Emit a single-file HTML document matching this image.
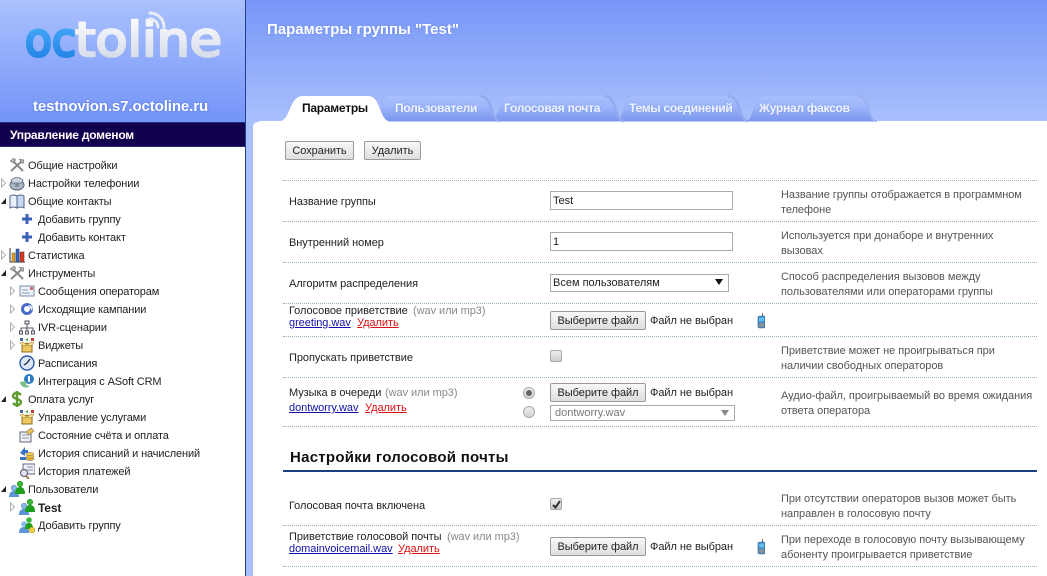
<!DOCTYPE html>
<html lang="ru"><head><meta charset="utf-8"><title>Параметры группы</title>
<style>
html,body{margin:0;padding:0;width:1047px;height:576px;overflow:hidden;background:#fff}
body{position:relative;font:11px/14px "Liberation Sans","DejaVu Sans",sans-serif;color:#222}
.t,.a{position:absolute;white-space:nowrap}
.t{line-height:14px;letter-spacing:-.05px;margin-top:1px}
.n{letter-spacing:-.13px}
.a{box-sizing:border-box}
.h{color:#555}.g{color:#888}
a{text-decoration:underline}.l{color:#11a}.r{color:#d11}
.b{position:absolute;box-sizing:border-box;border:1px solid #9a9a9a;border-radius:2px;background:linear-gradient(#f8f8f8,#dedede);text-align:center;line-height:19px;color:#222;letter-spacing:-.05px}
.i{position:absolute;box-sizing:border-box;border:1px solid #aaa;background:#fff;padding-left:2px;line-height:18px;color:#222}
.d{position:absolute;left:283px;width:754px;height:0;border-top:1px dotted #8fb0b8}
.c{position:absolute;left:550px;width:12px;height:12px;box-sizing:border-box;border:1px solid #aaa;border-radius:2px;background:linear-gradient(#eee,#ccc)}
.o{position:absolute;left:523px;width:12px;height:12px;box-sizing:border-box;border:1px solid #aaa;border-radius:50%;background:linear-gradient(#eee,#d4d4d4)}
.m{font-size:12px;font-weight:bold;letter-spacing:-.25px;color:#f0f4ff;margin-top:0;text-shadow:0 0 2px #7f9af0}
svg.s{position:absolute;width:16px;height:16px}
</style></head><body>

<div class="a" style="left:0;top:0;width:245px;height:122px;background:linear-gradient(#aac1fd,#7494f8)"></div>
<div class="a" style="left:245px;top:0;width:1px;height:576px;background:#23408c"></div>
<div class="a" style="left:246px;top:0;width:801px;height:122px;background:linear-gradient(#7796f8,#a9c0fc)"></div>
<div class="a" style="left:246px;top:122px;width:7px;height:454px;background:#a9c0fc"></div>
<div class="a" style="left:253px;top:121px;width:794px;height:455px;background:#fff;border-top-left-radius:9px"></div>
<svg class="a" style="left:246px;top:110px;width:12px;height:24px" viewBox="0 0 12 24"><path d="M7 11h5v1c-3 0-5 2-5 5z" fill="#a9c0fc"/></svg>

<svg class="a" style="left:15px;top:5px;width:215px;height:70px" viewBox="0 0 215 70">
<defs><linearGradient id="lg1" x1="0" y1="0" x2="0" y2="1"><stop offset="0" stop-color="#52b4ff"/><stop offset="1" stop-color="#1c7ce0"/></linearGradient>
<linearGradient id="lg2" x1="0" y1="0" x2="0" y2="1"><stop offset="0" stop-color="#ffffff"/><stop offset="1" stop-color="#cdd5e4"/></linearGradient></defs>
<text x="10" y="51" font-family="'DejaVu Sans',sans-serif" font-size="46" fill="url(#lg1)" stroke="url(#lg1)" stroke-width="3" stroke-linejoin="round" textLength="51" lengthAdjust="spacingAndGlyphs">oc</text>
<text x="60" y="51" font-family="'DejaVu Sans',sans-serif" font-size="47" fill="url(#lg2)" stroke="url(#lg2)" stroke-width="2.500" stroke-linejoin="round" textLength="147" lengthAdjust="spacingAndGlyphs">toline</text>
<path d="M135 8a14 14 0 0 1 14 14M135 14a8 8 0 0 1 8 8" fill="none" stroke="#e9edf5" stroke-width="3" stroke-linecap="round"/>
</svg>
<span class="t" style="left:33px;top:99px;margin-top:0;font-size:15px;line-height:16px;font-weight:bold;color:#fff;letter-spacing:-.1px;text-shadow:0 0 2px #4d6fd8">testnovion.s7.octoline.ru</span>
<div class="a" style="left:0;top:122px;width:245px;height:25px;background:#12004f;border-top:1px solid #23307c;border-bottom:1px solid #23307c"></div>
<span class="t" style="left:10px;top:127px;font-size:12px;font-weight:bold;color:#fff;letter-spacing:-.22px">Управление доменом</span>

<svg width="0" height="0" style="position:absolute"><defs>
<symbol id="tools" viewBox="0 0 16 16"><path d="M2 14 13 4M14 14 4 4" stroke="#888" stroke-width="2" fill="none"/><path d="M1 4l4-3 2 2-3 3zM10 2l5 1-1 4z" fill="#aab0b8" stroke="#666" stroke-width=".5"/></symbol>
<symbol id="phone" viewBox="0 0 16 16"><ellipse cx="8" cy="10" rx="7" ry="5" fill="#aeb8c6" stroke="#5c6a7e"/><path d="M2 5q6-5 12 0l-1 3H3z" fill="#ccd4de" stroke="#5c6a7e" stroke-width=".8"/><circle cx="8" cy="10" r="2" fill="#7d8a9c"/></symbol>
<symbol id="book" viewBox="0 0 16 16"><path d="M1 3q3-2 7 0v12q-4-2-7 0z" fill="#e8eefa" stroke="#52658a"/><path d="M15 3q-3-2-7 0v12q4-2 7 0z" fill="#c8d8f2" stroke="#52658a"/></symbol>
<symbol id="plus" viewBox="0 0 16 16"><path d="M8 3v10M3 8h10" stroke="#3a62b8" stroke-width="3"/></symbol>
<symbol id="chart" viewBox="0 0 16 16"><path d="M1 1v14h15" fill="none" stroke="#333"/><rect x="3" y="6" width="3" height="9" fill="#e8a020" stroke="#553"  stroke-width=".5"/><rect x="7" y="2" width="3" height="13" fill="#2f66c8" stroke="#235" stroke-width=".5"/><rect x="11" y="5" width="4" height="10" fill="#d83a20" stroke="#522" stroke-width=".5"/></symbol>
<symbol id="mail" viewBox="0 0 16 16"><rect x="1" y="3" width="14" height="10" fill="#eef2fa" stroke="#7a8aa8"/><path d="M3 7h6M3 10h8" stroke="#8a9ab8"/><rect x="11" y="4" width="3" height="3" fill="#d86a6a"/></symbol>
<symbol id="ref" viewBox="0 0 16 16"><circle cx="8" cy="8" r="6" fill="#4668c8"/><circle cx="8" cy="8" r="3" fill="#fff"/><path d="M9 4l5 1-1 5z" fill="#dfe6f8"/></symbol>
<symbol id="net" viewBox="0 0 16 16"><path d="M8 5v4M2 12V9h12v3M8 9v3" fill="none" stroke="#556"/><rect x="6" y="2" width="4" height="3" fill="#eee" stroke="#556"/><rect x="0.500" y="12" width="3" height="3" fill="#eee" stroke="#556"/><rect x="6.500" y="12" width="3" height="3" fill="#eee" stroke="#556"/><rect x="12.500" y="12" width="3" height="3" fill="#eee" stroke="#556"/></symbol>
<symbol id="box" viewBox="0 0 16 16"><path d="M3 8l5-2 5 2v7H3z" fill="#f0c860" stroke="#8a6a20"/><path d="M1 6l3-1 4 3-4 1zM15 6l-3-1-4 3 4 1z" fill="#f8e090" stroke="#8a6a20" stroke-width=".5"/><rect x="1" y="1" width="3" height="3" fill="#4466aa"/><rect x="12" y="1" width="3" height="3" fill="#c84030"/><path d="M6 3l3-2v3z" fill="#50a050"/></symbol>
<symbol id="clock" viewBox="0 0 16 16"><circle cx="8" cy="8" r="7" fill="#dbe8fa" stroke="#2c5aa8" stroke-width="1.400"/><path d="M8 8 11 4M8 8 5 10" stroke="#223" stroke-width="1.300"/></symbol>
<symbol id="sync" viewBox="0 0 16 16"><circle cx="10" cy="6" r="5" fill="#2f7ac0"/><path d="M1 9a6 6 0 0 0 10 4l-4-1 0-4-6 1z" fill="#7cc08a"/><rect x="9" y="3" width="2" height="6" fill="#fff"/></symbol>
<symbol id="dollar" viewBox="0 0 16 16"><path d="M12 4Q8 0 5 3T8 8t3 5-7-1M8 0v16" fill="none" stroke="#5c9a30" stroke-width="2.400"/></symbol>
<symbol id="card" viewBox="0 0 16 16"><rect x="1" y="5" width="11" height="10" fill="#eef2f8" stroke="#667"/><path d="M3 8h7M3 11h7" stroke="#99a"/><path d="M7 5l5-4 3 3-5 4z" fill="#e8c060" stroke="#875" stroke-width=".6"/></symbol>
<symbol id="hist" viewBox="0 0 16 16"><ellipse cx="11" cy="14" rx="4" ry="1.500" fill="#e0b030" stroke="#864"  stroke-width=".5"/><ellipse cx="11" cy="11.500" rx="4" ry="1.500" fill="#f0c840" stroke="#864" stroke-width=".5"/><ellipse cx="11" cy="9" rx="4" ry="1.500" fill="#f0d050" stroke="#864" stroke-width=".5"/><path d="M1 8l5-6v3h3v3H6v3zM1 12h6v3H1z" fill="#3a70c8"/></symbol>
<symbol id="mag" viewBox="0 0 16 16"><rect x="4" y="1" width="12" height="10" fill="#eef2fa" stroke="#667"/><path d="M8 4h6M8 7h6" stroke="#889"/><circle cx="5" cy="10" r="3.500" fill="#dde6f4" stroke="#667" stroke-width="1.200"/><path d="M7 13l3 3" stroke="#a08050" stroke-width="2"/></symbol>
<symbol id="users" viewBox="0 0 16 16"><circle cx="5" cy="7" r="2.800" fill="#8ab8ea" stroke="#4a78b8" stroke-width=".5"/><path d="M0 16q0-6 5-6t5 6z" fill="#5c94d8"/><circle cx="11" cy="3" r="2.800" fill="#38b838" stroke="#1a7a1a" stroke-width=".5"/><path d="M6 13q0-7 5-7t5 7z" fill="#1ea01e"/></symbol>
<symbol id="uadd" viewBox="0 0 16 16"><circle cx="5" cy="7" r="2.800" fill="#8ab8ea"/><path d="M0 16q0-6 5-6t5 6z" fill="#5c94d8"/><circle cx="10" cy="3" r="2.800" fill="#38b838"/><path d="M6 12q0-6 4-6t4 6z" fill="#1ea01e"/><circle cx="13" cy="13" r="3" fill="#f0d040" stroke="#a08010" stroke-width=".5"/></symbol>
<symbol id="mob" viewBox="0 0 8 16"><path d="M5 0h1v4H5z" fill="#667"/><rect x="1" y="3" width="7" height="12" rx="1.500" fill="#3c86c8" stroke="#47688a" stroke-width=".6"/><rect x="2" y="4.500" width="5" height="4" fill="#5cc0f0"/><rect x="2" y="10" width="5" height="4" fill="#8a9098"/></symbol>
</defs></svg>

<svg class="a" style="left:0;top:150px;width:20px;height:380px" viewBox="0 150 20 380">
<g fill="#fff" stroke="#b0b0b0"><path d="M1.500 179v8l4-4zM1.500 251v8l4-4zM10.500 287v8l4-4zM10.500 305v8l4-4zM10.500 323v8l4-4zM10.500 341v8l4-4zM10.500 503v8l4-4z"/></g>
<g fill="#222"><path d="M6 198v6H1zM6 270v6H1zM6 396v6H1zM6 486v6H1z"/></g>
</svg>
<svg class="s" style="left:9px;top:157px"><use href="#tools"/></svg>
<svg class="s" style="left:9px;top:175px"><use href="#phone"/></svg>
<svg class="s" style="left:9px;top:193px"><use href="#book"/></svg>
<svg class="s" style="left:19px;top:211px"><use href="#plus"/></svg>
<svg class="s" style="left:19px;top:229px"><use href="#plus"/></svg>
<svg class="s" style="left:9px;top:247px"><use href="#chart"/></svg>
<svg class="s" style="left:9px;top:265px"><use href="#tools"/></svg>
<svg class="s" style="left:19px;top:283px"><use href="#mail"/></svg>
<svg class="s" style="left:19px;top:301px"><use href="#ref"/></svg>
<svg class="s" style="left:19px;top:319px"><use href="#net"/></svg>
<svg class="s" style="left:19px;top:337px"><use href="#box"/></svg>
<svg class="s" style="left:19px;top:355px"><use href="#clock"/></svg>
<svg class="s" style="left:19px;top:373px"><use href="#sync"/></svg>
<svg class="s" style="left:9px;top:391px"><use href="#dollar"/></svg>
<svg class="s" style="left:19px;top:409px"><use href="#box"/></svg>
<svg class="s" style="left:19px;top:427px"><use href="#card"/></svg>
<svg class="s" style="left:19px;top:445px"><use href="#hist"/></svg>
<svg class="s" style="left:19px;top:463px"><use href="#mag"/></svg>
<svg class="s" style="left:9px;top:481px"><use href="#users"/></svg>
<svg class="s" style="left:19px;top:499px"><use href="#users"/></svg>
<svg class="s" style="left:19px;top:517px"><use href="#uadd"/></svg>

<span class="t n" style="left:28px;top:158px">Общие настройки</span>
<span class="t n" style="left:28px;top:176px">Настройки телефонии</span>
<span class="t n" style="left:28px;top:194px">Общие контакты</span>
<span class="t n" style="left:38px;top:212px">Добавить группу</span>
<span class="t n" style="left:38px;top:230px">Добавить контакт</span>
<span class="t n" style="left:28px;top:248px">Статистика</span>
<span class="t n" style="left:28px;top:266px">Инструменты</span>
<span class="t n" style="left:38px;top:284px">Сообщения операторам</span>
<span class="t n" style="left:38px;top:302px">Исходящие кампании</span>
<span class="t n" style="left:38px;top:320px">IVR-сценарии</span>
<span class="t n" style="left:38px;top:338px">Виджеты</span>
<span class="t n" style="left:38px;top:356px">Расписания</span>
<span class="t n" style="left:38px;top:374px">Интеграция с ASoft CRM</span>
<span class="t n" style="left:28px;top:392px">Оплата услуг</span>
<span class="t n" style="left:38px;top:410px">Управление услугами</span>
<span class="t n" style="left:38px;top:428px">Состояние счёта и оплата</span>
<span class="t n" style="left:38px;top:446px">История списаний и начислений</span>
<span class="t n" style="left:38px;top:464px">История платежей</span>
<span class="t n" style="left:28px;top:482px">Пользователи</span>
<span class="t n" style="left:38px;top:500px;font-weight:bold;font-size:12px">Test</span>
<span class="t n" style="left:38px;top:518px">Добавить группу</span>

<span class="t" style="left:267px;top:22px;margin-top:0;font-size:15px;line-height:16px;font-weight:bold;color:#fff;letter-spacing:0;text-shadow:0 0 2px #6a8ae8">Параметры группы "Test"</span>

<svg class="a" style="left:270px;top:90px;width:620px;height:34px" viewBox="270 90 620 34">
<defs><linearGradient id="tg" x1="0" y1="0" x2="0" y2="1"><stop offset="0" stop-color="#a8bffc"/><stop offset=".4" stop-color="#9db6fa"/><stop offset="1" stop-color="#7a96ee"/></linearGradient></defs>
<g fill="url(#tg)" stroke="none">
<path d="M745 121.500c10 0 6-25.500 20-25.500h92c14 0 10 25.500 20 25.500z"/><path d="M857 96c14 0 10 25 20 25" fill="none" stroke="#9cb2ee" stroke-width="2"/>
<path d="M615 121.500c10 0 6-25.500 20-25.500h93c14 0 10 25.500 20 25.500z"/><path d="M728 96c14 0 10 25 20 25" fill="none" stroke="#93aaee" stroke-width="2.500"/>
<path d="M490 121.500c10 0 6-25.500 20-25.500h94c14 0 10 25.500 20 25.500z"/><path d="M604 96c14 0 10 25 20 25" fill="none" stroke="#93aaee" stroke-width="2.500"/>
<path d="M372 121.500c10 0 6-25.500 20-25.500h88c14 0 10 25.500 20 25.500z"/><path d="M480 96c14 0 10 25 20 25" fill="none" stroke="#93aaee" stroke-width="2.500"/>
</g>
<path d="M277 122C292 122 288 96 303 96H368C382 96 378 122 392 122z" fill="#fff"/>
</svg>
<span class="t m" style="left:302px;top:101px;color:#111;text-shadow:none">Параметры</span>
<span class="t m" style="left:395px;top:101px">Пользователи</span>
<span class="t m" style="left:504px;top:101px">Голосовая почта</span>
<span class="t m" style="left:629px;top:101px">Темы соединений</span>
<span class="t m" style="left:759px;top:101px">Журнал факсов</span>

<div class="b" style="left:285px;top:141px;width:69px;height:19px">Сохранить</div>
<div class="b" style="left:364px;top:141px;width:57px;height:19px">Удалить</div>

<div class="d" style="top:180px"></div>
<div class="d" style="top:221px"></div>
<div class="d" style="top:262px"></div>
<div class="d" style="top:303px"></div>
<div class="d" style="top:336px"></div>
<div class="d" style="top:377px"></div>
<div class="d" style="top:426px"></div>
<div class="d" style="top:525px"></div>
<div class="d" style="top:566px"></div>

<span class="t" style="left:289px;top:194px">Название группы</span>
<div class="i" style="left:550px;top:191px;width:183px;height:19px">Test</div>
<span class="t h" style="left:781px;top:187px">Название группы отображается в программном</span>
<span class="t h" style="left:781px;top:202px">телефоне</span>

<span class="t" style="left:289px;top:235px">Внутренний номер</span>
<div class="i" style="left:550px;top:232px;width:183px;height:19px">1</div>
<span class="t h" style="left:781px;top:228px">Используется при донаборе и внутренних</span>
<span class="t h" style="left:781px;top:243px">вызовах</span>

<span class="t" style="left:289px;top:276px">Алгоритм распределения</span>
<div class="i" style="left:550px;top:274px;width:179px;height:18px;line-height:16px">Всем пользователям</div>
<svg class="a" style="left:715px;top:279px;width:9px;height:7px"><path d="M0 0h8L4 6z" fill="#111"/></svg>
<span class="t h" style="left:781px;top:269px">Способ распределения вызовов между</span>
<span class="t h" style="left:781px;top:284px">пользователями или операторами группы</span>

<span class="t" style="left:289px;top:303px">Голосовое приветствие</span>
<span class="t g" style="left:413px;top:303px">(wav или mp3)</span>
<span class="t" style="left:289px;top:315px"><a class="l">greeting.wav</a></span>
<span class="t" style="left:357px;top:315px"><a class="r">Удалить</a></span>
<div class="b" style="left:550px;top:311px;width:96px;height:19px">Выберите файл</div>
<span class="t" style="left:650px;top:313px">Файл не выбран</span>
<svg class="a" style="left:757px;top:313px;width:8px;height:16px" viewBox="0 0 8 16"><use href="#mob"/></svg>

<span class="t" style="left:289px;top:350px">Пропускать приветствие</span>
<div class="c" style="top:350px"></div>
<span class="t h" style="left:781px;top:343px">Приветствие может не проигрываться при</span>
<span class="t h" style="left:781px;top:358px">наличии свободных операторов</span>

<span class="t" style="left:289px;top:385px">Музыка в очереди</span>
<span class="t g" style="left:385px;top:385px">(wav или mp3)</span>
<span class="t" style="left:289px;top:400px"><a class="l">dontworry.wav</a></span>
<span class="t" style="left:365px;top:400px"><a class="r">Удалить</a></span>
<div class="o" style="top:387px"><div style="width:6px;height:6px;border-radius:50%;background:#666;margin:2px"></div></div>
<div class="o" style="top:406px"></div>
<div class="b" style="left:550px;top:383px;width:96px;height:19px">Выберите файл</div>
<span class="t" style="left:650px;top:385px">Файл не выбран</span>
<div class="i" style="left:550px;top:405px;width:185px;height:16px;line-height:15px;color:#777;padding-left:4px">dontworry.wav</div>
<svg class="a" style="left:721px;top:410px;width:9px;height:7px"><path d="M0 0h8L4 6z" fill="#888"/></svg>
<span class="t h" style="left:781px;top:388px">Аудио-файл, проигрываемый во время ожидания</span>
<span class="t h" style="left:781px;top:403px">ответа оператора</span>

<span class="t" style="left:290px;top:448px;line-height:18px;font-size:15px;font-weight:bold;color:#111;letter-spacing:.26px">Настройки голосовой почты</span>
<div class="a" style="left:283px;top:470px;width:754px;height:2px;background:#1c3f7e"></div>

<span class="t" style="left:289px;top:498px">Голосовая почта включена</span>
<div class="c" style="top:498px"><svg style="position:absolute;left:1px;top:1px;width:9px;height:9px" viewBox="0 0 9 9"><path d="M1 5l2.500 2.500L8 1" fill="none" stroke="#333" stroke-width="2"/></svg></div>
<span class="t h" style="left:781px;top:491px">При отсутствии операторов вызов может быть</span>
<span class="t h" style="left:781px;top:506px">направлен в голосовую почту</span>

<span class="t" style="left:289px;top:529px">Приветствие голосовой почты</span>
<span class="t g" style="left:447px;top:529px">(wav или mp3)</span>
<span class="t" style="left:289px;top:541px"><a class="l">domainvoicemail.wav</a></span>
<span class="t" style="left:398px;top:541px"><a class="r">Удалить</a></span>
<div class="b" style="left:550px;top:537px;width:96px;height:19px">Выберите файл</div>
<span class="t" style="left:650px;top:539px">Файл не выбран</span>
<svg class="a" style="left:757px;top:539px;width:8px;height:16px" viewBox="0 0 8 16"><use href="#mob"/></svg>
<span class="t h" style="left:781px;top:532px">При переходе в голосовую почту вызывающему</span>
<span class="t h" style="left:781px;top:547px">абоненту проигрывается приветствие</span>
</body></html>
